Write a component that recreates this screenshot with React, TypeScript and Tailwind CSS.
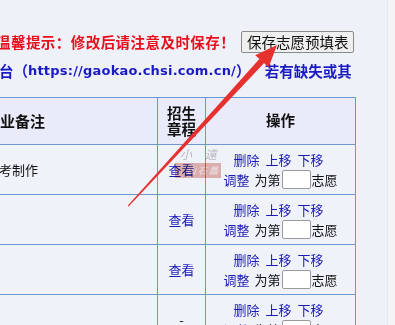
import React from "react";

const cjk = '"Noto Sans CJK SC", "Noto Sans", sans-serif';

function OpCell() {
  return (
    <div className="flex flex-col items-center justify-center text-[13px] leading-[20px]" style={{ fontFamily: cjk }}>
      <div className="flex gap-[6px] text-[#1a1ab8] pr-[4px]">
        <span>删除</span>
        <span>上移</span>
        <span>下移</span>
      </div>
      <div className="flex items-center text-[#111]">
        <span className="text-[#1a1ab8]">调整</span>
        <span className="ml-[5px]">为第</span>
        <span className="inline-block w-[29px] h-[19px] bg-white border border-[#9a9a9a] rounded-[2px] mx-[1px]" />
        <span>志愿</span>
      </div>
    </div>
  );
}

export default function App() {
  const border = "border-[#6b98cf]";
  const rows = [
    { note: "参考制作", view: "查看" },
    { note: "", view: "查看" },
    { note: "", view: "查看" },
    { note: "", view: "-" },
  ];
  return (
    <div className="relative w-[395px] h-[325px] overflow-hidden bg-[#eff1f8] flex" style={{ fontFamily: cjk }}>
      <div className="w-[387px] shrink-0 flex flex-col pt-[31px]">
        <div className="flex items-center h-[22px] ml-[-4px]">
          <span className="text-[14.5px] font-bold text-[#e8101c] whitespace-nowrap tracking-[0.45px]">温馨提示：修改后请注意及时保存！</span>
          <button className="ml-[6px] h-[22px] w-[113px] shrink-0 bg-[#efefef] border border-[#8a8a8a] rounded-[2px] text-[14.5px] text-[#111] leading-none flex items-center justify-center">
            保存志愿预填表
          </button>
        </div>
        <div className="flex items-center h-[20px] mt-[8px] ml-[-1px] whitespace-nowrap font-bold text-[#1a1ac4] text-[14.5px]">
          <span>台（</span>
          <span className="text-[13px] tracking-[0.2px]" style={{ fontFamily: '"DejaVu Sans", sans-serif' }}>https://gaokao.chsi.com.cn/</span>
          <span>），</span>
          <span className="ml-[7px]">若有缺失或其</span>
        </div>
        <div className={`mt-[16px] ml-[-30px] w-[386px] grid grid-cols-[188px_48px_150px] border-t ${border}`}>
          <div className={`h-[47px] bg-[#e9ebfa] border-r border-b ${border} flex items-center pl-[15px] text-[15px] font-bold text-[#111]`}>专业备注</div>
          <div className={`h-[47px] bg-[#e9ebfa] border-r border-b ${border} flex flex-col items-center justify-center text-[14.5px] leading-[16px] font-bold text-[#111]`}>
            <span>招生</span>
            <span>章程</span>
          </div>
          <div className={`h-[47px] bg-[#e9ebfa] border-r border-b ${border} flex items-center justify-center text-[14.5px] font-bold text-[#111] pb-[2px]`}>操作</div>
          {rows.map((r, i) => (
            <React.Fragment key={i}>
              <div className={`h-[50px] bg-[#f0f2fa] border-r border-b ${border} flex items-center pl-[16px] text-[13px] text-[#111]`}>{r.note}</div>
              <div className={`h-[50px] bg-[#f0f2fa] border-r border-b ${border} flex items-center justify-center text-[13px] ${r.view === "-" ? "text-[#111]" : "text-[#1a1ab8]"}`}>{r.view}</div>
              <div className={`h-[50px] bg-[#f0f2fa] border-r border-b ${border} flex items-center justify-center`}>
                <OpCell />
              </div>
            </React.Fragment>
          ))}
        </div>
      </div>
      <div className="flex-1 bg-[#f4f4f7] border-l border-[#e6e8f0]" />

      {/* watermark */}
      <div className="absolute left-[180px] top-[148px] text-[12px] italic text-[#c4c4c4] leading-none tracking-[5px] mix-blend-multiply">小 遠</div>
      <div className="absolute left-[175px] top-[163px] w-[46px] h-[15px] bg-[#e9b7b0] mix-blend-multiply flex items-center justify-end pr-[3px] text-[9px] text-[#fbeeee] leading-none italic">山 石 磊</div>

      {/* red arrow */}
      <svg className="absolute left-0 top-0 pointer-events-none" width="395" height="325" viewBox="0 0 395 325">
        <polygon points="127.6,205.7 128.6,206.4 264.4,62.8 259.8,58.6" fill="#e6312e" />
        <polygon points="277,45 268.6,67.4 263.2,62.2 261.0,60.2 255.2,55.2" fill="#e6312e" />
      </svg>
    </div>
  );
}
